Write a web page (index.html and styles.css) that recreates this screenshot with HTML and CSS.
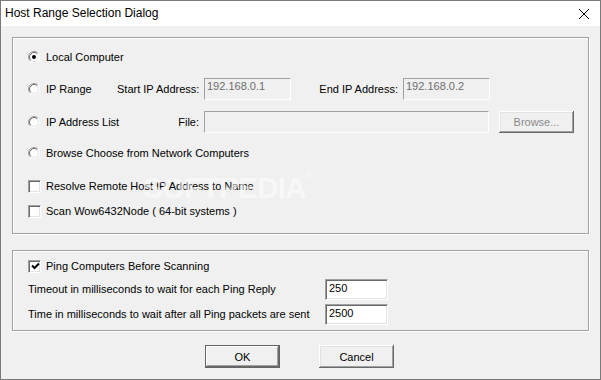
FILE: index.html
```html
<!DOCTYPE html>
<html>
<head>
<meta charset="utf-8">
<link rel="stylesheet" href="styles.css">
</head>
<body>
<div class="window">
  <div class="titlebar">
    <span class="title">Host Range Selection Dialog</span>
    <svg class="close" width="12" height="12" viewBox="0 0 12 12"><path d="M1 1L11 11M11 1L1 11" stroke="#000" stroke-width="1" fill="none"/></svg>
  </div>
  <div class="content">
    <div class="group g1">
      <div class="row r1">
        <span class="opt"><svg class="radio" width="12" height="12" viewBox="0 0 12 12"><circle cx="6" cy="6" r="5" fill="#fff"/><path d="M2.11 9.89A5.5 5.5 0 0 1 9.89 2.11" stroke="#a0a0a0" fill="none"/><path d="M9.89 2.11A5.5 5.5 0 0 1 2.11 9.89" stroke="#fff" fill="none"/><path d="M2.82 9.18A4.5 4.5 0 0 1 9.18 2.82" stroke="#696969" fill="none"/><path d="M9.18 2.82A4.5 4.5 0 0 1 2.82 9.18" stroke="#e3e3e3" fill="none"/><circle cx="6" cy="6" r="2" fill="#000"/></svg><span>Local Computer</span></span>
      </div>
      <div class="row r2">
        <span class="opt"><svg class="radio" width="12" height="12" viewBox="0 0 12 12"><circle cx="6" cy="6" r="5" fill="#fff"/><path d="M2.11 9.89A5.5 5.5 0 0 1 9.89 2.11" stroke="#a0a0a0" fill="none"/><path d="M9.89 2.11A5.5 5.5 0 0 1 2.11 9.89" stroke="#fff" fill="none"/><path d="M2.82 9.18A4.5 4.5 0 0 1 9.18 2.82" stroke="#696969" fill="none"/><path d="M9.18 2.82A4.5 4.5 0 0 1 2.82 9.18" stroke="#e3e3e3" fill="none"/></svg><span>IP Range</span></span>
        <span class="flabel">Start IP Address:</span>
        <span class="field disabled ip">192.168.0.1</span>
        <span class="flabel end">End IP Address:</span>
        <span class="field disabled ip">192.168.0.2</span>
      </div>
      <div class="row r3">
        <span class="opt"><svg class="radio" width="12" height="12" viewBox="0 0 12 12"><circle cx="6" cy="6" r="5" fill="#fff"/><path d="M2.11 9.89A5.5 5.5 0 0 1 9.89 2.11" stroke="#a0a0a0" fill="none"/><path d="M9.89 2.11A5.5 5.5 0 0 1 2.11 9.89" stroke="#fff" fill="none"/><path d="M2.82 9.18A4.5 4.5 0 0 1 9.18 2.82" stroke="#696969" fill="none"/><path d="M9.18 2.82A4.5 4.5 0 0 1 2.82 9.18" stroke="#e3e3e3" fill="none"/></svg><span>IP Address List</span></span>
        <span class="flabel">File:</span>
        <span class="field disabled file"></span>
        <span class="btn disabled browse">Browse...</span>
      </div>
      <div class="row r4">
        <span class="opt"><svg class="radio" width="12" height="12" viewBox="0 0 12 12"><circle cx="6" cy="6" r="5" fill="#fff"/><path d="M2.11 9.89A5.5 5.5 0 0 1 9.89 2.11" stroke="#a0a0a0" fill="none"/><path d="M9.89 2.11A5.5 5.5 0 0 1 2.11 9.89" stroke="#fff" fill="none"/><path d="M2.82 9.18A4.5 4.5 0 0 1 9.18 2.82" stroke="#696969" fill="none"/><path d="M9.18 2.82A4.5 4.5 0 0 1 2.82 9.18" stroke="#e3e3e3" fill="none"/></svg><span>Browse Choose from Network Computers</span></span>
      </div>
      <div class="row r5">
        <span class="check"></span><span>Resolve Remote Host IP Address to Name</span>
      </div>
      <div class="row r6">
        <span class="check"></span><span>Scan Wow6432Node ( 64-bit systems )</span>
      </div>
    </div>
    <div class="group g2">
      <div class="row p1">
        <span class="check"><svg width="9" height="9" viewBox="0 0 9 9"><path d="M1 3.5L3.5 6L8 1.5" stroke="#000" stroke-width="2" fill="none"/></svg></span><span>Ping Computers Before Scanning</span>
      </div>
      <div class="row p2">
        <span class="plabel">Timeout in milliseconds to wait for each Ping Reply</span>
        <span class="field num">250</span>
      </div>
      <div class="row p3">
        <span class="plabel">Time in milliseconds to wait after all Ping packets are sent</span>
        <span class="field num">2500</span>
      </div>
    </div>
    <div class="buttons">
      <span class="btn default">OK</span>
      <span class="btn">Cancel</span>
    </div>
  </div>
  <div class="watermark">SOFTPEDIA<span class="reg">®</span></div>
</div>
</body>
</html>
```
FILE: styles.css
```css
html, body {
  margin: 0;
  padding: 0;
  background: #f0f0f0;
}
.window {
  position: relative;
  width: 599px;
  height: 378px;
  border: 1px solid #7a7a7a;
  background: #f0f0f0;
  font-family: "Liberation Sans", Arial, sans-serif;
  font-size: 11px;
  color: #000;
  overflow: hidden;
}
.titlebar {
  height: 25px;
  background: #fff;
  display: flex;
  align-items: center;
  justify-content: space-between;
  padding: 0 10px 0 4px;
}
.title {
  font-family: "Liberation Sans", Arial, sans-serif;
  font-size: 12px;
  color: #000;
  margin-top: -1px;
}
.close {
  display: block;
}
.content {
  padding-left: 11px;
}
.group {
  box-sizing: border-box;
  width: 577px;
  border: 1px solid #a0a0a0;
  box-shadow: 1px 1px 0 #fff, inset 1px 1px 0 #fff;
}
.g1 {
  height: 197px;
  margin-top: 11px;
  padding: 8px 0 0 15px;
}
.g2 {
  height: 81px;
  margin-top: 16px;
  padding: 4px 0 0 15px;
}
.row {
  display: flex;
  align-items: center;
  height: 22px;
  white-space: nowrap;
}
.r2 { margin-top: 10px; }
.r3 { margin-top: 11px; }
.r4 { margin-top: 9px; }
.r5 { margin-top: 11px; }
.r6 { margin-top: 3px; }
.opt {
  display: flex;
  align-items: center;
  width: 89px;
}
.radio {
  display: block;
  flex: none;
  margin-right: 6px;
}
.flabel {
  width: 87px;
  box-sizing: border-box;
  padding-right: 5px;
  text-align: right;
}
.flabel.end {
  width: 112px;
}
.field {
  box-sizing: border-box;
  height: 22px;
  border: 1px solid;
  border-color: #a0a0a0 #fff #fff #a0a0a0;
  padding: 1px 0 0 2px;
  line-height: 13px;
}
.field.disabled {
  background: #f0f0f0;
  color: #6d6d6d;
}
.field.ip {
  width: 87px;
}
.field.file {
  width: 285px;
}
.btn {
  box-sizing: border-box;
  display: flex;
  align-items: center;
  justify-content: center;
  width: 75px;
  height: 23px;
  background: #f0f0f0;
  box-shadow: inset -1px -1px 0 #696969, inset 1px 1px 0 #fff, inset -2px -2px 0 #a0a0a0, inset 2px 2px 0 #e3e3e3;
}
.btn.disabled {
  color: #8a8a8a;
}
.browse {
  margin-left: 10px;
  height: 22px;
}
.check {
  box-sizing: border-box;
  flex: none;
  width: 13px;
  height: 13px;
  margin-right: 5px;
  background: #fff;
  border: 1px solid;
  border-color: #a0a0a0 #fff #fff #a0a0a0;
  box-shadow: inset 1px 1px 0 #696969, inset -1px -1px 0 #e3e3e3;
  display: flex;
  align-items: center;
  justify-content: center;
}
.check svg {
  display: block;
  margin: 0 0 0 1px;
}
.p2 { margin-top: 1px; }
.p3 { margin-top: 3px; }
.plabel {
  width: 297px;
}
.field.num {
  width: 63px;
  height: 21px;
  background: #fff;
  border-color: #a0a0a0 #fff #fff #a0a0a0;
  box-shadow: inset 1px 1px 0 #696969, inset -1px -1px 0 #e3e3e3;
  padding: 2px 0 0 3px;
}
.buttons {
  display: flex;
  gap: 39px;
  padding-left: 193px;
  margin-top: 14px;
}
.btn.default {
  box-shadow: inset 0 0 0 1px #646464, inset -2px -2px 0 #696969, inset 2px 2px 0 #fff, inset -3px -3px 0 #a0a0a0;
}
.watermark {
  position: absolute;
  left: 142px;
  top: 170px;
  font-family: "Liberation Sans", Arial, sans-serif;
  font-weight: bold;
  font-size: 30px;
  letter-spacing: -1px;
  color: rgba(255, 255, 255, 0.55);
  pointer-events: none;
}
.watermark .reg {
  font-size: 10px;
  vertical-align: top;
  font-weight: normal;
}
```
